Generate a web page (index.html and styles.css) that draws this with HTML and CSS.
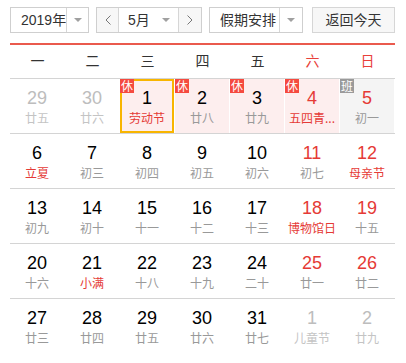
FILE: index.html
```html
<!DOCTYPE html>
<html lang="zh">
<head>
<meta charset="utf-8">
<title>万年历</title>
<link rel="stylesheet" href="styles.css">
</head>
<body>
<div class="cal">
  <div class="toolbar">
    <div class="select year">
      <span class="sel-text">2019年</span>
      <span class="sel-arrow"><i class="tri"></i></span>
    </div>
    <div class="month-group">
      <span class="nav prev"><svg width="6" height="10" viewBox="0 0 6 10"><path d="M5.5 0.5 L1 5 L5.5 9.5" fill="none" stroke="#777" stroke-width="1"/></svg></span>
      <span class="month-sel"><span class="sel-text">5月</span><i class="tri"></i></span>
      <span class="nav next"><svg width="6" height="10" viewBox="0 0 6 10"><path d="M0.5 0.5 L5 5 L0.5 9.5" fill="none" stroke="#777" stroke-width="1"/></svg></span>
    </div>
    <div class="select holiday">
      <span class="sel-text">假期安排</span>
      <span class="sel-arrow"><i class="tri"></i></span>
    </div>
    <button class="today">返回今天</button>
  </div>

  <div class="weekdays">
    <span>一</span><span>二</span><span>三</span><span>四</span><span>五</span><span class="red">六</span><span class="red">日</span>
  </div>

  <div class="week">
    <div class="day other"><b>29</b><em>廿五</em></div>
    <div class="day other"><b>30</b><em>廿六</em></div>
    <div class="day rest selected"><i class="tag">休</i><b>1</b><em class="fest">劳动节</em></div>
    <div class="day rest"><i class="tag">休</i><b>2</b><em>廿八</em></div>
    <div class="day rest"><i class="tag">休</i><b>3</b><em>廿九</em></div>
    <div class="day rest weekend"><i class="tag">休</i><b>4</b><em class="fest">五四青...</em></div>
    <div class="day work weekend"><i class="tag">班</i><b>5</b><em>初一</em></div>
  </div>
  <div class="week">
    <div class="day"><b>6</b><em class="fest">立夏</em></div>
    <div class="day"><b>7</b><em>初三</em></div>
    <div class="day"><b>8</b><em>初四</em></div>
    <div class="day"><b>9</b><em>初五</em></div>
    <div class="day"><b>10</b><em>初六</em></div>
    <div class="day weekend"><b>11</b><em>初七</em></div>
    <div class="day weekend"><b>12</b><em class="fest">母亲节</em></div>
  </div>
  <div class="week">
    <div class="day"><b>13</b><em>初九</em></div>
    <div class="day"><b>14</b><em>初十</em></div>
    <div class="day"><b>15</b><em>十一</em></div>
    <div class="day"><b>16</b><em>十二</em></div>
    <div class="day"><b>17</b><em>十三</em></div>
    <div class="day weekend"><b>18</b><em class="fest">博物馆日</em></div>
    <div class="day weekend"><b>19</b><em>十五</em></div>
  </div>
  <div class="week">
    <div class="day"><b>20</b><em>十六</em></div>
    <div class="day"><b>21</b><em class="fest">小满</em></div>
    <div class="day"><b>22</b><em>十八</em></div>
    <div class="day"><b>23</b><em>十九</em></div>
    <div class="day"><b>24</b><em>二十</em></div>
    <div class="day weekend"><b>25</b><em>廿一</em></div>
    <div class="day weekend"><b>26</b><em>廿二</em></div>
  </div>
  <div class="week last">
    <div class="day"><b>27</b><em>廿三</em></div>
    <div class="day"><b>28</b><em>廿四</em></div>
    <div class="day"><b>29</b><em>廿五</em></div>
    <div class="day"><b>30</b><em>廿六</em></div>
    <div class="day"><b>31</b><em>廿七</em></div>
    <div class="day other"><b>1</b><em>儿童节</em></div>
    <div class="day other"><b>2</b><em>廿九</em></div>
  </div>
</div>
</body>
</html>
```

FILE: styles.css
```css
* { box-sizing: border-box; }

body {
  margin: 0;
  background: #fff;
  font-family: "Liberation Sans", "Noto Sans CJK SC", sans-serif;
  color: #333;
}

.cal {
  width: 395px;
  padding: 7px 0 0 10px;
}

.toolbar {
  display: flex;
  align-items: flex-start;
  height: 26px;
  font-size: 14px;
}

.select {
  display: flex;
  height: 26px;
  border: 1px solid #cfcfcf;
  background: #fff;
}

.sel-text {
  line-height: 24px;
  color: #333;
  white-space: nowrap;
}

.sel-arrow {
  display: flex;
  align-items: center;
  justify-content: center;
  border-left: 1px solid #d6d6d6;
}

.tri {
  display: block;
  width: 0;
  height: 0;
  border-left: 4px solid transparent;
  border-right: 4px solid transparent;
  border-top: 4px solid #a0a0a0;
}

.year { width: 80px; }
.year .sel-text { flex: 0 0 54px; padding-left: 10px; }
.year .sel-arrow { flex: 1; }

.month-group {
  display: flex;
  flex: 0 0 106px;
  height: 26px;
  margin-left: 7px;
  border: 1px solid #cfcfcf;
}

.nav {
  display: flex;
  align-items: center;
  justify-content: center;
  background: #f7f7f7;
}

.prev { flex: 0 0 22px; border-right: 1px solid #d6d6d6; }
.next { flex: 0 0 23px; border-left: 1px solid #d6d6d6; }

.month-sel {
  flex: 0 0 59px;
  display: flex;
  align-items: center;
  justify-content: space-between;
  padding: 0 8px 0 9px;
}

.holiday {
  flex: 0 0 94px;
  margin-left: 7px;
}
.holiday .sel-text { flex: 0 0 69px; padding-left: 10px; }
.holiday .sel-arrow { flex: 1; }

.today {
  flex: 0 0 83px;
  margin-left: 9px;
  height: 26px;
  border: 1px solid #d6d6d6;
  background: #f7f7f7;
  font: inherit;
  font-size: 14px;
  color: #333;
  padding: 0;
  line-height: 24px;
}

.weekdays {
  display: grid;
  grid-template-columns: repeat(7, 55px);
  margin-top: 10px;
  width: 385px;
  height: 36px;
  border-top: 2px solid #ea5a4e;
  border-bottom: 1px solid #d4d4d4;
  font-size: 14px;
  color: #333;
}

.weekdays span {
  text-align: center;
  line-height: 32px;
}

.weekdays .red { color: #e8413a; }

.week {
  display: grid;
  grid-template-columns: repeat(7, 55px);
  width: 385px;
  height: 55px;
  border-bottom: 1px solid #d4d4d4;
}

.week.last { border-bottom: none; }

.day {
  position: relative;
  margin-right: 1px;
  display: flex;
  flex-direction: column;
  align-items: center;
  padding-top: 9px;
}

.day b {
  font-weight: normal;
  font-size: 18px;
  line-height: 20px;
  color: #000;
  font-family: "Liberation Sans", sans-serif;
}

.day em {
  font-style: normal;
  font-size: 12px;
  line-height: 16px;
  margin-top: 2px;
  color: #999;
  white-space: nowrap;
  font-family: "Noto Sans CJK SC", sans-serif;
}

.day em.fest { color: #e53a36; }

.day.weekend b { color: #e53a36; }

.day.other b { color: #bdbdbd; }
.day.other em { color: #c4c4c4; }

.day.rest { background: #fdeeee; }
.day.work { background: #f4f4f4; }

.day.selected {
  border: 2px solid #f8b500;
  padding-top: 7px;
}

.tag {
  position: absolute;
  left: 0;
  top: 0;
  width: 14px;
  height: 14px;
  font-style: normal;
  font-size: 12px;
  line-height: 14px;
  text-align: center;
  color: #fff;
  background: #f54a3f;
  font-family: "Noto Sans CJK SC", sans-serif;
}

.selected .tag { left: -2px; top: -2px; }

.work .tag { background: #9a9a9a; }
```
